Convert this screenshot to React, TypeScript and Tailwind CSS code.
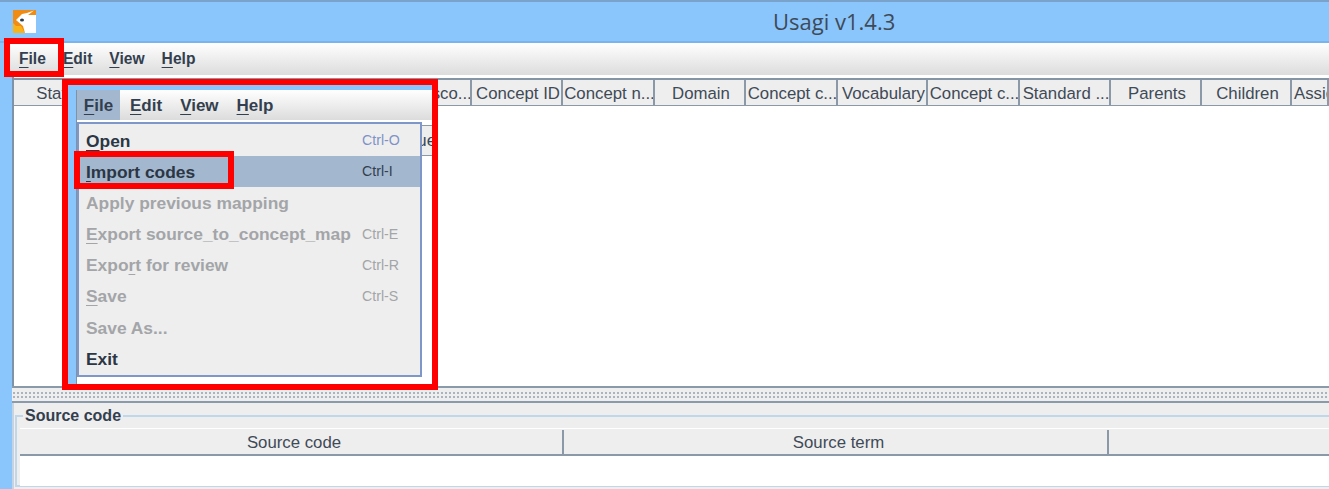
/**
 * Usagi main window with the File menu callout pasted over the table.
 */

// the first columns sit under the callout, so only their cells show
const COLUMNS = [
  { label: 'Status' },
  { label: '' },
  { label: '' },
  { label: '' },
  { label: 'Match sco...' },
  { label: 'Concept ID' },
  { label: 'Concept n...' },
  { label: 'Domain' },
  { label: 'Concept c...' },
  { label: 'Vocabulary' },
  { label: 'Concept c...' },
  { label: 'Standard ...' },
  { label: 'Parents' },
  { label: 'Children' },
  { label: 'Assigned reviewer', left: true },
]

const MENUS = [
  { label: 'File', key: 'F' },
  { label: 'Edit', key: 'E' },
  { label: 'View', key: 'V' },
  { label: 'Help', key: 'H' },
]

const ITEMS = [
  { before: '', key: 'O', after: 'pen', shortcut: 'Ctrl-O', tone: 'open' },
  { before: '', key: 'I', after: 'mport codes', shortcut: 'Ctrl-I', tone: 'active' },
  { before: 'Apply previous mapping', key: '', after: '', shortcut: '', tone: 'off' },
  { before: '', key: 'E', after: 'xport source_to_concept_map', shortcut: 'Ctrl-E', tone: 'off' },
  { before: 'Expo', key: 'r', after: 't for review', shortcut: 'Ctrl-R', tone: 'off' },
  { before: '', key: 'S', after: 'ave', shortcut: 'Ctrl-S', tone: 'off' },
  { before: 'Save As...', key: '', after: '', shortcut: '', tone: 'off' },
  { before: 'Exit', key: '', after: '', shortcut: '', tone: 'on' },
]

function Logo() {
  return (
    <svg width="23" height="23" viewBox="0 0 23 23" className="shrink-0">
      <rect width="23" height="23" fill="#f08c14" />
      <path d="M0 13L10 23H0Z" fill="#f9b31a" />
      <path d="M0 16H8L12 23H0Z" fill="#f9b31a" />
      <path d="M3 10L9 4L14 3L21 0.5L15 5L23 5V23H12L10 16Z" fill="#ffffff" />
      <ellipse cx="9" cy="10" rx="2" ry="1.6" fill="#2c3e50" />
    </svg>
  )
}

function RedBox({ className }: { className: string }) {
  return <div className={`pointer-events-none absolute border-[6px] border-[#ff0000] ${className}`} />
}

function MenuLabel({ label, mnemonic }: { label: string; mnemonic: string }) {
  return (
    <span>
      <span className="underline underline-offset-[3px]">{mnemonic}</span>
      {label.slice(1)}
    </span>
  )
}

function FileMenuCallout() {
  return (
    <div className="absolute left-[68px] top-[85px] flex h-[299px] w-[364px] bg-[#8ac6fc] pt-[5px] pl-[8px]">
      <div className="flex min-w-0 flex-1 flex-col overflow-hidden border-l border-[#7f93a8] bg-white">
        <div className="flex h-[30px] shrink-0 items-center bg-gradient-to-b from-white to-[#dcdcdc] pt-[2px] text-[17px] font-bold text-[#333f4f]">
          {MENUS.map((m) => (
            <div
              key={m.label}
              className={
                m.label === 'File'
                  ? '-mt-[2px] flex h-[30px] w-[43px] items-center justify-center bg-[#a3b8cf] pt-[2px]'
                  : 'flex h-full items-center pl-[10px] pr-[8px]'
              }
            >
              <MenuLabel label={m.label} mnemonic={m.key} />
            </div>
          ))}
        </div>
        <div className="mt-[5px] flex h-[31px] shrink-0 items-center justify-end overflow-hidden border-y border-[#8a98a8] bg-[#eeeeee] text-[16.8px] text-[#3a4655]">
          <span className="-mr-[4px]">Value</span>
        </div>
      </div>

      <div className="absolute left-[9px] top-[37px] flex h-[255px] w-[345px] flex-col border-2 border-[#7f97c8] bg-[#eeeeee] pt-[1px]">
        {ITEMS.map((item) => (
          <div
            key={item.before + item.key + item.after}
            className={`grid h-[31.2px] shrink-0 grid-cols-[276px_1fr] items-center pl-[7px] ${
              item.tone === 'active' ? 'bg-[#a3b8cf]' : ''
            }`}
          >
            <span
              className={`whitespace-nowrap text-[17.4px] font-bold ${
                item.tone === 'off' ? 'text-[#a3a5a8]' : 'text-[#2c3644]'
              }`}
            >
              {item.before}
              <span className="underline underline-offset-[3px]">{item.key}</span>
              {item.after}
            </span>
            <span
              className={`whitespace-nowrap text-[14.2px] ${
                item.tone === 'open'
                  ? 'text-[#7f92c8]'
                  : item.tone === 'active'
                    ? 'text-[#333f4f]'
                    : 'text-[#a3a5a8]'
              }`}
            >
              {item.shortcut}
            </span>
          </div>
        ))}
      </div>
    </div>
  )
}

export default function App() {
  return (
    <div className="relative flex h-[489px] w-[1329px] flex-col overflow-hidden bg-[#8ac6fc] font-['Liberation_Sans',Arial,sans-serif]">
      {/* title bar */}
      <div className="flex h-[43px] shrink-0 items-center border-y-2 border-t-[#7aa3cc] border-b-[#7ab4ec] pl-[13px]">
        <Logo />
        <span className="ml-[737px] font-['Open_Sans',sans-serif] text-[22px] text-[#3f4a57]">
          Usagi v1.4.3
        </span>
      </div>

      {/* menu bar */}
      <div className="ml-[10px] flex h-[32px] shrink-0 items-center bg-gradient-to-b from-white to-[#dcdcdc] text-[15.6px] font-bold text-[#333f4f]">
        <div className="ml-[9px] flex gap-[17px]">
          {MENUS.map((m) => (
            <MenuLabel key={m.label} label={m.label} mnemonic={m.key} />
          ))}
        </div>
      </div>

      {/* mapping table */}
      <div className="ml-[12px] flex min-h-0 flex-1 flex-col border-l-2 border-[#7f93a8] bg-white pt-[3px]">
        <div className="grid h-[28px] shrink-0 grid-cols-[91px_91px_92px_92px_92px_91px_92px_91px_92px_90px_92px_91px_91px_90px_37px] border-t-2 border-[#8495a6] bg-[#eeeeee] text-[16.8px] text-[#3f4a57]">
          {COLUMNS.map((c, i) => (
            <div
              key={`${c.label}-${i}`}
              className={`flex items-center overflow-hidden whitespace-nowrap border-b border-r-2 border-[#8a98a8] pt-[2px] ${
                c.left ? 'justify-start pl-[2px]' : 'justify-center pl-[3px]'
              }`}
            >
              {c.label}
            </div>
          ))}
        </div>
        <div className="flex-1" />
      </div>

      {/* splitter */}
      <div className="ml-[12px] flex h-[17px] shrink-0 items-center border-y-2 border-[#8a9aaa] bg-[#eeeeee]">
        <div className="h-[8px] w-full bg-[radial-gradient(circle,#aab4c0_1px,transparent_1px)] bg-[length:4px_4px]" />
      </div>

      {/* source code panel */}
      <div className="ml-[12px] h-[86px] shrink-0 border-l-2 border-[#c6d4e2] bg-[#eeeeee] pl-[1px] pt-[3px]">
        <fieldset className="h-[81px] border-2 border-r-0 border-[#c0d6ea] pl-[3px]">
          <legend className="ml-[3px] px-[2px] text-[16px] font-bold leading-[20px] text-[#333f4f]">
            Source code
          </legend>
          <div className="mt-[2px] grid h-[28px] grid-cols-[544px_545px_1fr] border-b-2 border-t border-[#8a98a8] border-t-white bg-[#eeeeee] pt-[1px] text-[16.8px] text-[#3f4a57]">
            <div className="flex items-center justify-center border-r-2 border-[#8a98a8] pl-[6px]">Source code</div>
            <div className="flex items-center justify-center border-r-2 border-[#8a98a8] pl-[6px]">Source term</div>
            <div />
          </div>
          <div className="h-[30px] bg-white" />
        </fieldset>
      </div>

      <FileMenuCallout />

      <RedBox className="left-[4px] top-[38px] h-[39px] w-[60px]" />
      <RedBox className="left-[62px] top-[79px] h-[311px] w-[376px]" />
      <RedBox className="left-[74px] top-[151px] h-[38px] w-[160px]" />
    </div>
  )
}
